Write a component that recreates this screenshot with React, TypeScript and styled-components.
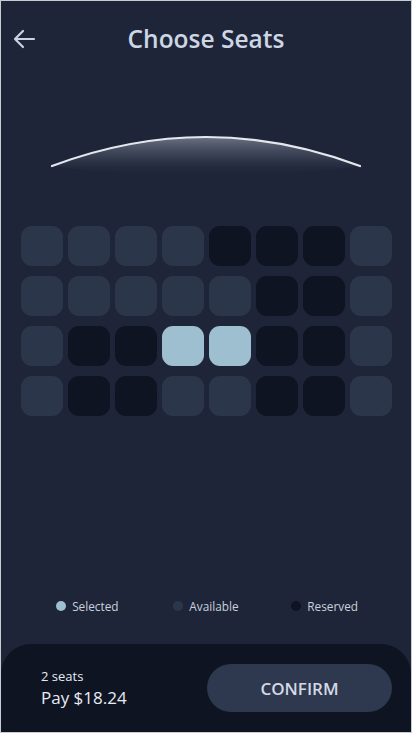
import React from "react";
import styled, { createGlobalStyle } from "styled-components";

const Global = createGlobalStyle`
  html, body { margin: 0; padding: 0; background: #1e2538; }
  * { box-sizing: border-box; }
  body { font-family: "Open Sans", "Noto Sans", "Liberation Sans", sans-serif; }
`;

const Page = styled.div`
  height: 100vh;
  border: 1px solid #c9ccd2;
  background: #1e2538;
  display: flex;
  flex-direction: column;
  overflow: hidden;
`;

const Header = styled.header`
  position: relative;
  height: 74px;
  display: flex;
  align-items: center;
  justify-content: center;
`;

const BackButton = styled.button`
  position: absolute;
  left: 10px;
  top: 25px;
  width: 26px;
  height: 26px;
  padding: 0;
  border: none;
  background: none;
  color: #c9d3e1;
  display: flex;
  align-items: center;
  justify-content: center;
`;

const Title = styled.h1`
  margin: 0;
  font-size: 24.5px;
  font-weight: 600;
  color: #cdd6e4;
  letter-spacing: 0;
`;

const ScreenSvg = styled.svg`
  display: block;
  width: 410px;
  height: 120px;
`;

const SeatGrid = styled.div`
  display: grid;
  grid-template-columns: repeat(8, 42px);
  grid-auto-rows: 40px;
  column-gap: 5px;
  row-gap: 10px;
  padding: 31px 0 0 20px;
`;

type SeatKind = "A" | "R" | "S";

const Seat = styled.div<{ $kind: SeatKind }>`
  border-radius: 11px;
  background: ${(p) =>
    p.$kind === "S" ? "#9dbfcf" : p.$kind === "R" ? "#0f1422" : "#2c364b"};
`;

const Spacer = styled.div`
  flex: 1;
`;

const Legend = styled.div`
  display: grid;
  grid-template-columns: repeat(3, 1fr);
  margin: 0 27px;
  height: 20px;
  align-items: center;
`;

const LegendItem = styled.div`
  display: flex;
  align-items: center;
  justify-content: center;
  gap: 6px;
  font-size: 11.8px;
  color: #c9d1dc;
`;

const Dot = styled.span<{ $kind: SeatKind }>`
  width: 10px;
  height: 10px;
  border-radius: 50%;
  background: ${(p) =>
    p.$kind === "S" ? "#9dbfcf" : p.$kind === "R" ? "#0f1422" : "#2c364b"};
`;

const BottomBar = styled.footer`
  margin-top: 28px;
  height: 88px;
  background: #0f1422;
  border-radius: 30px 30px 0 0;
  display: flex;
  align-items: center;
  justify-content: space-between;
  padding: 0 19px 0 40px;
`;

const Summary = styled.div`
  display: flex;
  flex-direction: column;
  gap: 1px;
  color: #e6ebf2;
`;

const SeatCount = styled.div`
  font-size: 13px;
  font-weight: 500;
`;

const Price = styled.div`
  font-size: 17px;
  font-weight: 500;
`;

const ConfirmButton = styled.button`
  width: 185px;
  height: 48px;
  border: none;
  border-radius: 24px;
  background: #2e384e;
  color: #d3dae5;
  font-family: inherit;
  font-size: 17px;
  font-weight: 600;
  letter-spacing: 0;
`;

const rows: SeatKind[][] = [
  ["A", "A", "A", "A", "R", "R", "R", "A"],
  ["A", "A", "A", "A", "A", "R", "R", "A"],
  ["A", "R", "R", "S", "S", "R", "R", "A"],
  ["A", "R", "R", "A", "A", "R", "R", "A"],
];

export default function App() {
  return (
    <>
      <Global />
      <Page>
        <Header>
          <BackButton aria-label="Back">
            <svg width="26" height="26" viewBox="0 0 26 26" fill="none">
              <path
                d="M23 13 H4 M12 5 L4 13 L12 21"
                stroke="currentColor"
                strokeWidth="2.2"
                strokeLinecap="round"
                strokeLinejoin="round"
              />
            </svg>
          </BackButton>
          <Title>Choose Seats</Title>
        </Header>
        <ScreenSvg viewBox="0 0 410 120">
          <defs>
            <linearGradient id="glow" x1="0" y1="0" x2="0" y2="1">
              <stop offset="0" stopColor="#c8d0de" stopOpacity="0.45" />
              <stop offset="0.55" stopColor="#8a94a8" stopOpacity="0.18" />
              <stop offset="1" stopColor="#1e2538" stopOpacity="0" />
            </linearGradient>
          </defs>
          <path
            d="M51 91 Q205 33 359 91 Q205 112 51 91 Z"
            fill="url(#glow)"
          />
          <path
            d="M51 91 Q205 33 359 91"
            fill="none"
            stroke="#e4e8ee"
            strokeWidth="2.2"
            strokeLinecap="round"
          />
        </ScreenSvg>
        <SeatGrid>
          {rows.flatMap((r, ri) =>
            r.map((k, ci) => <Seat key={`${ri}-${ci}`} $kind={k} />)
          )}
        </SeatGrid>
        <Spacer />
        <Legend>
          <LegendItem>
            <Dot $kind="S" />
            Selected
          </LegendItem>
          <LegendItem>
            <Dot $kind="A" />
            Available
          </LegendItem>
          <LegendItem>
            <Dot $kind="R" />
            Reserved
          </LegendItem>
        </Legend>
        <BottomBar>
          <Summary>
            <SeatCount>2 seats</SeatCount>
            <Price>Pay $18.24</Price>
          </Summary>
          <ConfirmButton>CONFIRM</ConfirmButton>
        </BottomBar>
      </Page>
    </>
  );
}
